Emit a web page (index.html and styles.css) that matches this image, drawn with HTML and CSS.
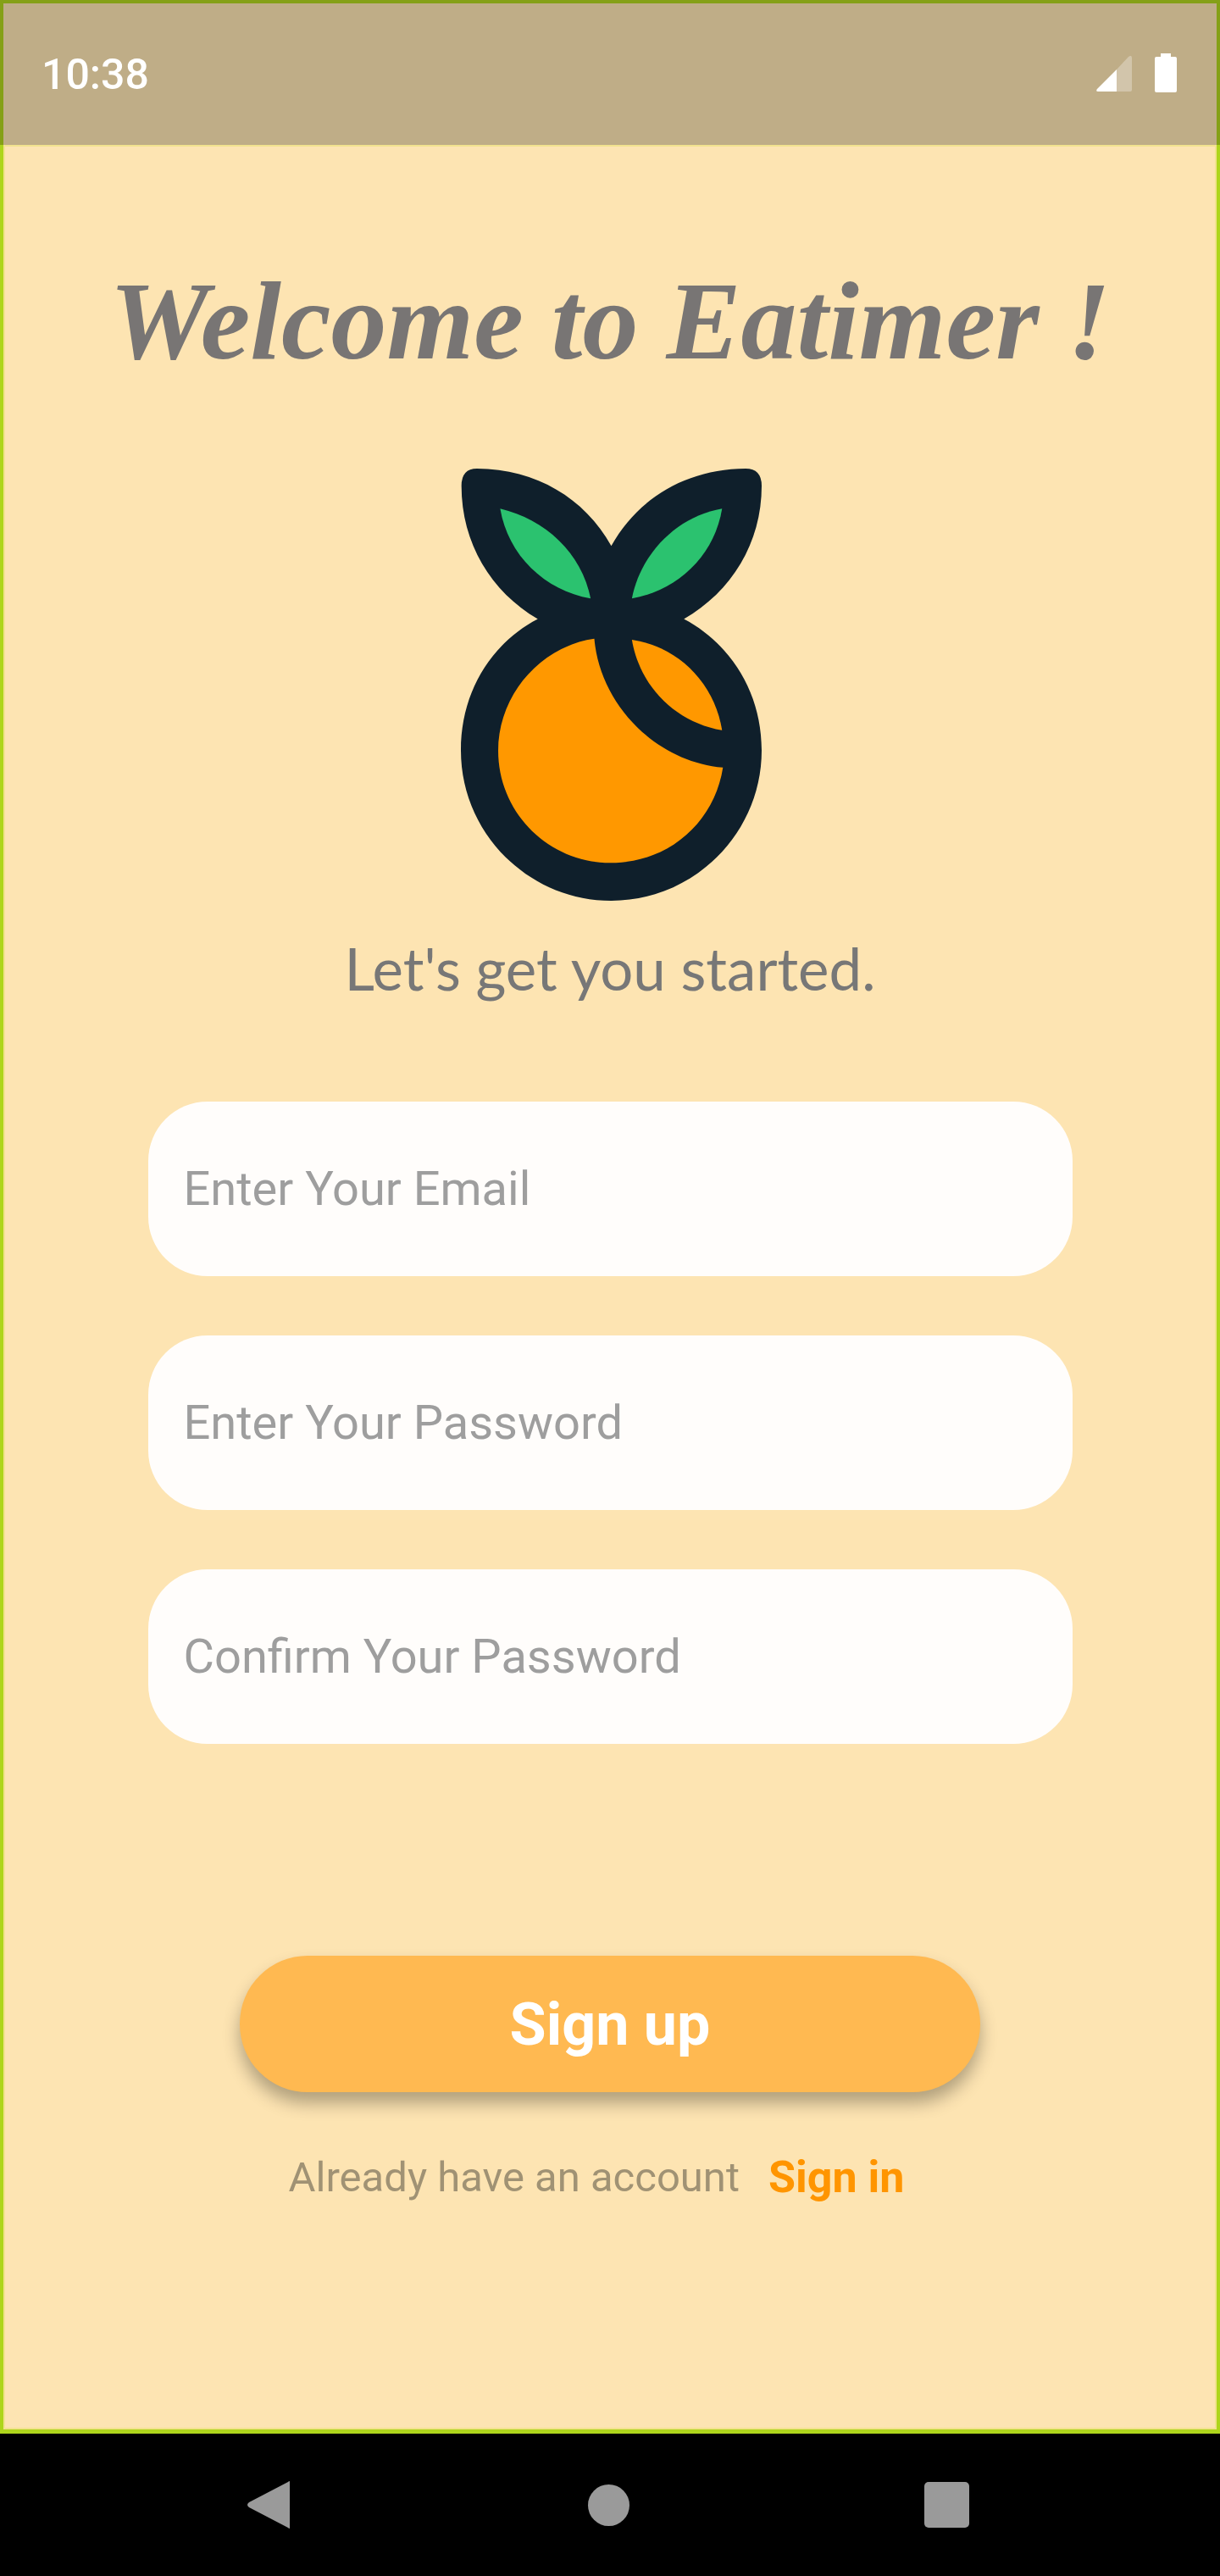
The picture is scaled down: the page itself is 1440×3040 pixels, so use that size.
FILE: index.html
```html
<!DOCTYPE html>
<html>
    <head>
        <title>Eatimer Sign up</title>
        <link rel="stylesheet" href="styles.css">
    </head>

    <body>
        <div class="phone">
            <header class="statusBar">
                <span class="clock">10:38</span>
                <div class="statusIcons">
                    <svg class="signalIcon" viewBox="0 0 42 42" width="42" height="42">
                        <path d="M24 16 L24 42 L2 42 Q-1 42 1 39 Z" fill="#fff"/>
                        <path d="M24 16 L38 1 Q42 -2 42 3 L42 40 Q42 42 40 42 L24 42 Z" fill="#fff" fill-opacity="0.3"/>
                    </svg>
                    <svg class="batteryIcon" viewBox="0 0 26 46" width="26" height="46">
                        <path d="M7 0 H19 V4 H24 Q26 4 26 6 V44 Q26 46 24 46 H2 Q0 46 0 44 V6 Q0 4 2 4 H7 Z" fill="#fff"/>
                    </svg>
                </div>
            </header>

            <main class="content">
                <h1 class="welcome">Welcome to Eatimer !</h1>

                <svg class="logo" viewBox="133 93 1064 1427" width="355" height="510" preserveAspectRatio="none">
                    <path fill="#0f1f2b" d="M190 93 C400 95 570 190 665 348 C760 190 930 95 1140 93 Q1197 93 1197 150 C1197 340 1090 500 922 590 C1085 670 1197 830 1197 1023 C1197 1296 958 1520 665 1520 C372 1520 133 1296 133 1023 C133 830 240 670 405 590 C240 500 135 340 135 150 Q135 93 190 93 Z"/>
                    <path fill="#2bc26f" d="M272 225 C430 260 560 370 592 522 C430 495 300 380 272 225 Z"/>
                    <path fill="#2bc26f" d="M1057 225 C900 250 770 370 738 522 C900 495 1030 380 1057 225 Z"/>
                    <path fill="#ff9800" d="M605 655 C625 870 820 1060 1060 1080 C1030 1260 870 1395 662 1395 C443 1395 265 1229 265 1025 C265 840 415 680 605 655 Z"/>
                    <path fill="#ff9800" d="M738 658 C900 680 1030 800 1057 957 C890 930 765 810 738 658 Z"/>
                </svg>

                <p class="tagline">Let's get you started.</p>

                <form class="signupForm" onsubmit="return false;">
                    <div class="field">Enter Your Email</div>
                    <div class="field">Enter Your Password</div>
                    <div class="field">Confirm Your Password</div>
                    <button class="signupButton" type="submit">Sign up</button>
                </form>

                <p class="signinRow">
                    <span>Already have an account</span>
                    <a href="#">Sign in</a>
                </p>
            </main>

            <footer class="navBar">
                <svg viewBox="0 0 50 56" width="50" height="56">
                    <path d="M50 1 V55 Q50 57 48 55 L2 31 Q-2 28 2 25 L48 1 Q50 -1 50 1 Z" fill="#9a9a9a"/>
                </svg>
                <div class="navCircle"></div>
                <div class="navSquare"></div>
            </footer>
        </div>
    </body>
</html>
```

FILE: styles.css
```css
body {
    margin: 0;
    font-family: Roboto, sans-serif;
    background-color: #000;
}

.phone {
    width: 1440px;
    height: 3040px;
    display: flex;
    flex-direction: column;
}

.statusBar {
    height: 167px;
    flex: none;
    display: flex;
    align-items: flex-start;
    justify-content: space-between;
    padding: 0 47px 0 45px;
    background-color: #bfad87;
    border: 4px solid #85a017;
    border-bottom: none;
}

.clock {
    margin-top: 56px;
    font-size: 50px;
    line-height: 56px;
    font-weight: 500;
    color: #fff;
}

.statusIcons {
    display: flex;
    gap: 27px;
    margin-top: 59px;
}

.signalIcon {
    margin-top: 3px;
}

.content {
    flex: 1;
    display: flex;
    flex-direction: column;
    align-items: center;
    background-color: #fde4b2;
    border: solid #aed51c;
    border-width: 0 4px 5px;
    box-shadow: inset 0 0 0 2px #f2e28f;
}

.welcome {
    margin: 148px 0 0;
    font-family: "Liberation Serif", serif;
    font-style: italic;
    font-weight: 700;
    font-size: 132px;
    line-height: 120px;
    color: #787574;
    white-space: nowrap;
}

.logo {
    display: block;
    margin: 114px 0 0 3px;
}

.tagline {
    margin: 38px 0 0;
    font-family: Lato, sans-serif;
    font-size: 69px;
    line-height: 84px;
    color: #777;
}

.signupForm {
    display: flex;
    flex-direction: column;
    align-items: center;
    margin-top: 115px;
}

.field {
    width: 1049px;
    height: 206px;
    margin-bottom: 70px;
    padding-left: 42px;
    display: flex;
    align-items: center;
    font-size: 56px;
    color: #9e9e9e;
    background-color: #fffdfb;
    border-radius: 70px;
}

.signupButton {
    width: 874px;
    height: 161px;
    margin-top: 180px;
    padding: 0;
    border: none;
    border-radius: 80px;
    font-family: Roboto, sans-serif;
    font-size: 70px;
    font-weight: 700;
    color: #fff;
    background-color: #ffb951;
    box-shadow: 0 13px 20px rgba(0, 0, 0, 0.3);
}

.signinRow {
    display: flex;
    gap: 34px;
    margin: 68px 32px 0 0;
    font-size: 49px;
    line-height: 66px;
    color: #a09274;
}

.signinRow a {
    font-size: 52px;
    font-weight: 700;
    text-decoration: none;
    color: #ff9500;
}

.navBar {
    height: 168px;
    flex: none;
    display: flex;
    align-items: center;
    box-sizing: border-box;
    padding: 0 296px 0 292px;
    justify-content: space-between;
    background-color: #000;
}

.navCircle {
    width: 49px;
    height: 49px;
    margin-left: 4px;
    border-radius: 50%;
    background-color: #9a9a9a;
}

.navSquare {
    width: 53px;
    height: 54px;
    border-radius: 5px;
    background-color: #9a9a9a;
}
```
